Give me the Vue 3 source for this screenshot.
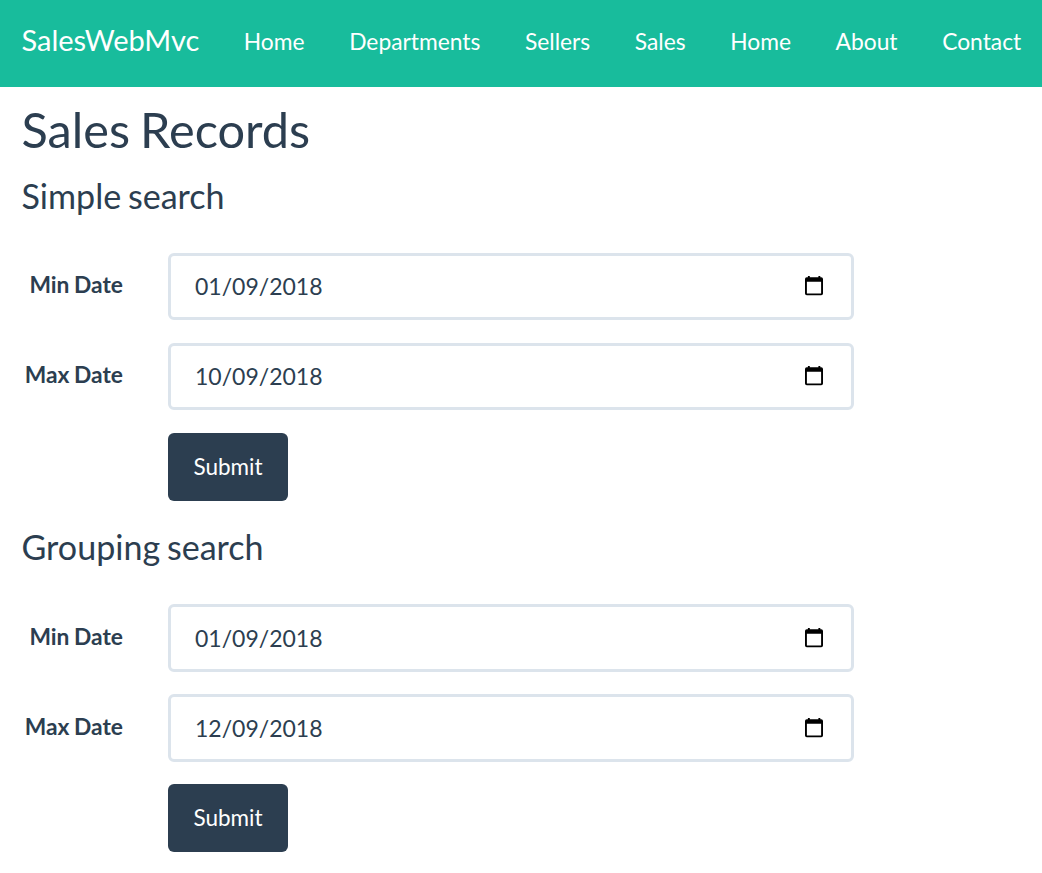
<script setup>
const links = ['Home', 'Departments', 'Sellers', 'Sales', 'Home', 'About', 'Contact']
const searches = [
  { title: 'Simple search', fields: [['Min Date', '01/09/2018'], ['Max Date', '10/09/2018']] },
  { title: 'Grouping search', fields: [['Min Date', '01/09/2018'], ['Max Date', '12/09/2018']] },
]
</script>

<template>
  <div class="page">
    <nav class="navbar">
      <a class="brand">SalesWebMvc</a>
      <a v-for="(link, i) in links" :key="i" class="link">{{ link }}</a>
    </nav>
    <main>
      <h2>Sales Records</h2>
      <section v-for="s in searches" :key="s.title">
        <h3>{{ s.title }}</h3>
        <form @submit.prevent>
          <div v-for="f in s.fields" :key="f[0]" class="row">
            <label>{{ f[0] }}</label>
            <div class="control">
              <span>{{ f[1] }}</span>
              <svg width="20" height="22" viewBox="0 0 20 22">
                <path fill="#000" fill-rule="evenodd" d="M3.9 1h1.9v1.3h8.6V1h1.9v1.3h.9q1.8 0 1.8 1.8v14.4q0 1.8-1.8 1.8H2.8Q1 20.300 1 18.500V4.100Q1 2.300 2.800 2.300h1.100zM2.900 6.700v11.700h14.200V6.700z" />
              </svg>
            </div>
          </div>
          <button type="submit">Submit</button>
        </form>
      </section>
    </main>
  </div>
</template>

<style>
body { margin: 0; background: #fff; }
</style>

<style scoped>
.page { width: 1042px; height: 873px; overflow: hidden; font-family: Lato, "Liberation Sans", sans-serif; font-size: 22.5px; color: #2c3e50; }
.navbar { display: flex; align-items: center; height: 87px; box-sizing: border-box; padding: 0 0 6px 21.5px; background: #18bc9c; color: #fff; white-space: nowrap; }
.brand { font-size: 29px; margin-right: 44.5px; padding-bottom: 3px; }
.link { margin-right: 44.6px; font-size: 22.8px; }
main { padding: 0 21.5px; }
h2, h3 { margin: 0; font-weight: 400; }
h2 { font-size: 48.7px; line-height: 53px; padding-top: 16px; word-spacing: -2.5px; }
h3 { font-size: 34.1px; line-height: 40px; padding-top: 19.6px; word-spacing: -2px; }
form { padding: 37.05px 0 7.1px; }
.row { display: flex; height: 67.5px; margin-bottom: 22.5px; }
label { width: 101.5px; margin-right: 45px; padding-top: 0.2px; box-sizing: border-box; text-align: right; font-size: 22.8px; font-weight: 700; line-height: 63px; word-spacing: -1px; }
.control { width: 686px; height: 67.5px; box-sizing: border-box; border: 3px solid #dce4ec; border-radius: 6px; padding: 0 27px 1px 24px; display: flex; align-items: center; justify-content: space-between; font-size: 23px; }
button { display: block; width: 120px; height: 68px; margin: 0 0 0 146.5px; padding: 0 0 1px; border: 0; border-radius: 6px; background: #2c3e50; color: #fff; font: inherit; }
</style>
